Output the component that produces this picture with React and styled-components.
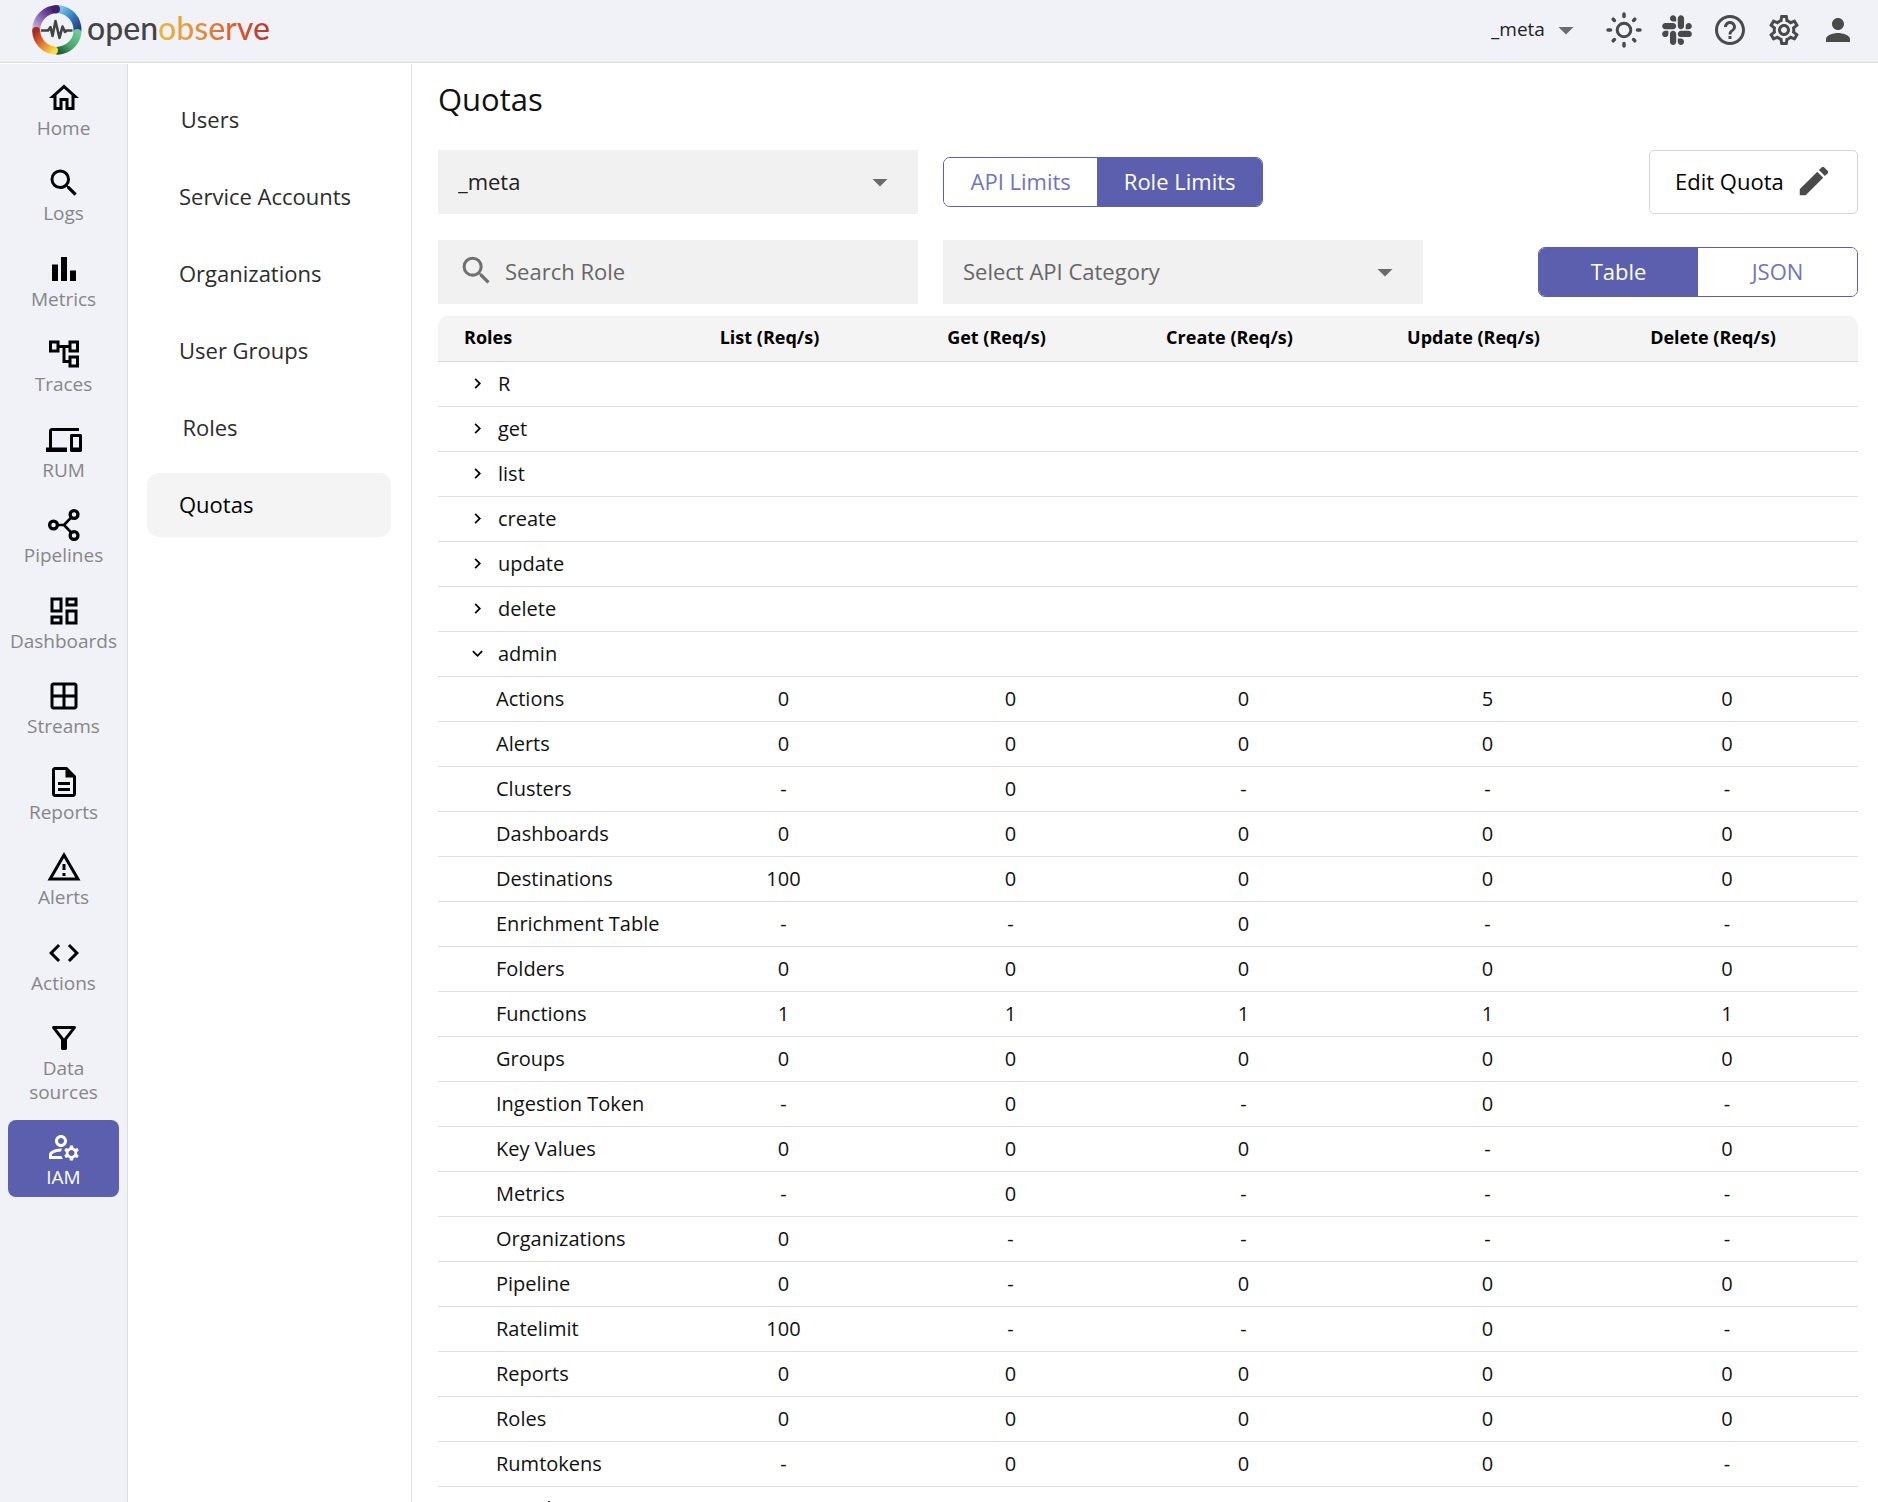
import React from "react";
import styled, { createGlobalStyle } from "styled-components";
import {
  MdOutlineHome, MdSearch, MdBarChart, MdOutlineAccountTree, MdOutlineDevices, MdOutlineDashboard,
  MdOutlineWindow, MdOutlineDescription, MdOutlineReportProblem, MdCode, MdOutlineFilterAlt,
  MdOutlineManageAccounts, MdHelpOutline, MdOutlineSettings, MdPerson, MdEdit, MdChevronRight, MdExpandMore,
  MdArrowDropDown,
} from "react-icons/md";
import { FaSlack } from "react-icons/fa";

const accent = "#5b5fad";
const line = "#dedede";

const GlobalStyle = createGlobalStyle`
  * { box-sizing: border-box; }
  body { margin: 0; background: #fff; color: #111; font-family: "Open Sans", "Noto Sans", sans-serif; font-size: 20px; }
  button, input, select { font: inherit; color: inherit; }
  a { color: inherit; text-decoration: none; }
`;

const Page = styled.div`
  display: flex;
  flex-direction: column;
  height: 100vh;
  overflow: hidden;
`;

const Header = styled.header`
  display: flex;
  align-items: center;
  justify-content: space-between;
  flex: none;
  height: 63px;
  padding: 0 22px 2px 32px;
  background: #f1f2f8;
  border-bottom: 1px solid ${line};
`;

const Brand = styled.a`
  display: flex;
  align-items: center;
  gap: 5px;
`;

const Wordmark = styled.span`
  padding-bottom: 5px;
  font-family: Lato, sans-serif;
  font-size: 32px;
  font-weight: 500;
  line-height: 40px;
  color: #444;
`;

const WordmarkAccent = styled.span`
  background: linear-gradient(90deg, #ebb840, #e08a38 40%, #dc5a34 70%, #b2362c);
  background-clip: text;
  color: transparent;
`;

const HeaderTools = styled.div`
  display: flex;
  align-items: center;
  gap: 18px;
`;

const IconButton = styled.button`
  display: flex;
  padding: 0;
  border: 0;
  background: none;
  color: #4a4a4a;
  font-size: ${(p) => p.$size || 36}px;
`;

const SelectBox = styled.label`
  display: flex;
  align-items: center;
  position: relative;
  width: ${(p) => p.$width || 480}px;
  height: ${(p) => (p.$bare ? 40 : 64)}px;
  margin-right: ${(p) => (p.$bare ? 4 : 0)}px;
  background: ${(p) => (p.$bare ? "none" : "#f1f1f1")};
  color: ${(p) => (p.$muted ? "#666" : "#222")};
  font-size: ${(p) => (p.$bare ? 19 : 22)}px;
  svg {
    position: absolute;
    right: ${(p) => (p.$bare ? 0 : 20)}px;
    font-size: 36px;
    color: #6b6b6b;
    pointer-events: none;
  }
`;

const Select = styled.select`
  appearance: none;
  width: 100%;
  height: 100%;
  padding: 0 ${(p) => (p.$bare ? 0 : 20)}px 2px;
  border: 0;
  background: none;
`;

const Body = styled.div`
  display: flex;
  flex: 1;
  min-height: 0;
  margin-top: 1px;
`;

const Sidebar = styled.nav`
  flex: none;
  width: 128px;
  padding: 7px 8px;
  background: #f1f2f8;
  border-right: 1px solid ${line};
`;

const NavList = styled.div`
  display: flex;
  flex-direction: column;
  justify-content: space-between;
  min-height: 75vh;
`;

const NavItem = styled.a`
  display: flex;
  flex-direction: column;
  align-items: center;
  padding: 9px 1px 8px;
  border-radius: 8px;
  background: ${(p) => (p.$active ? accent : "transparent")};
  color: ${(p) => (p.$active ? "#fff" : "#000")};
  svg { width: 36px; height: 36px; }
`;

const NavLabel = styled.span`
  color: ${(p) => (p.$active ? "#fff" : "#868686")};
  font-size: 19px;
  font-weight: 500;
  line-height: 24px;
  text-align: center;
`;

const Menu = styled.nav`
  display: flex;
  flex-direction: column;
  flex: none;
  gap: 13px;
  width: 284px;
  padding: 24px 20px 24px 19px;
  border-right: 1px solid ${line};
`;

const MenuItem = styled.a`
  display: flex;
  align-items: center;
  height: 64px;
  padding: 0 32px 2px;
  border-radius: 12px;
  background: ${(p) => (p.$active ? "#f4f4f4" : "transparent")};
  color: ${(p) => (p.$active ? "#000" : "#2c2c2c")};
  font-size: 22px;
`;

const MenuLabel = styled.span`
  min-width: 62px;
  text-align: center;
  white-space: nowrap;
`;

const Main = styled.main`
  display: flex;
  flex-direction: column;
  flex: 1;
  min-width: 0;
  padding: 15px 20px 0 26px;
`;

const Title = styled.h1`
  margin: 0 0 31px;
  font-size: 31px;
  font-weight: 400;
  line-height: 40px;
`;

const Toolbar = styled.div`
  display: flex;
  align-items: center;
  gap: 25px;
  height: 64px;
  margin-bottom: ${(p) => p.$bottom}px;
`;

const Spacer = styled.div`
  flex: 1;
`;

const Toggle = styled.div`
  display: flex;
  width: 320px;
  height: 50px;
  border: 1px solid ${accent};
  border-radius: 7px;
  overflow: hidden;
`;

const ToggleButton = styled.button`
  flex: 1 1 ${(p) => (p.$fit ? "auto" : "0")};
  padding: 0 2px 3px;
  border: 0;
  background: ${(p) => (p.$active ? accent : "#fff")};
  color: ${(p) => (p.$active ? "#fff" : "#6f74c0")};
  font-size: 22px;
`;

const EditButton = styled.button`
  display: flex;
  align-items: center;
  justify-content: space-between;
  width: 209px;
  height: 64px;
  padding: 0 24px 2px 25px;
  border: 1px solid #d5d5d5;
  border-radius: 5px;
  background: #fff;
  color: #000;
  font-size: 22px;
  svg { width: 38px; height: 38px; color: #4a4a4a; }
`;

const SearchBox = styled.label`
  display: flex;
  align-items: center;
  gap: 10px;
  width: 480px;
  height: 64px;
  padding: 0 20px 3px;
  background: #f1f1f1;
  svg { flex: none; width: 37px; height: 37px; color: #707070; }
`;

const SearchInput = styled.input`
  flex: 1;
  min-width: 0;
  padding: 0;
  border: 0;
  background: none;
  font-size: 22px;
  &::placeholder { color: #666; opacity: 1; }
`;

const TableArea = styled.div`
  flex: 1;
  min-height: 0;
  overflow: hidden;
`;

const Table = styled.table`
  width: 100%;
  table-layout: fixed;
  border-collapse: separate;
  border-spacing: 0;
`;

const Col = styled.col`
  width: ${(p) => p.$width}px;
`;

const HeadCell = styled.th`
  height: 46px;
  padding: 0 ${(p) => (p.$last ? 44 : 28)}px 3px 0;
  border-bottom: 1px solid #d6d6d6;
  background: #f4f4f4;
  color: #000;
  font-size: 18px;
  font-weight: 700;
  white-space: nowrap;
  &:first-child { padding-left: 26px; text-align: left; border-top-left-radius: 10px; }
  &:last-child { border-top-right-radius: 10px; }
`;

const Cell = styled.td`
  height: 45px;
  padding: 0 ${(p) => (p.$last ? 16 : 0)}px 2px 0;
  border-bottom: 1px solid ${line};
  font-size: 20px;
  text-align: center;
`;

const NameCell = styled(Cell)`
  padding-left: 58px;
  text-align: left;
  white-space: nowrap;
`;

const GroupCell = styled(Cell)`
  padding-left: 29px;
`;

const GroupButton = styled.button`
  display: flex;
  align-items: center;
  gap: 10px;
  padding: 0;
  border: 0;
  background: none;
  svg { width: 21px; height: 21px; color: #000; }
`;

const LogoMark = () => (
  <svg width="50" height="52" viewBox="32 4 50 52" fill="none" aria-hidden="true">
    <defs>
      <linearGradient id="purple" x1="0" y1="1" x2="1" y2="0"><stop offset="0" stopColor="#c3b3d8" /><stop offset=".65" stopColor="#68409a" /><stop offset="1" stopColor="#3a1a66" /></linearGradient>
      <linearGradient id="blue" x1="0" y1="0" x2="1" y2="1"><stop offset="0" stopColor="#74c3e8" /><stop offset=".6" stopColor="#2b72b8" /><stop offset="1" stopColor="#2a3f83" /></linearGradient>
      <linearGradient id="green" x1="1" y1="0" x2="0" y2="1"><stop offset="0" stopColor="#6cc795" /><stop offset=".55" stopColor="#4ea76d" /><stop offset="1" stopColor="#1e5c33" /></linearGradient>
      <linearGradient id="fire" x1="1" y1="1" x2="0" y2="0"><stop offset="0" stopColor="#f7dc45" /><stop offset=".5" stopColor="#e8762f" /><stop offset="1" stopColor="#a82a26" /></linearGradient>
    </defs>
    <g strokeWidth="8" strokeLinecap="round">
      <path d="M36.200 30A20.700 20.700 0 0 1 57 9.300" stroke="url(#purple)" />
      <path d="M60.500 9.500A20.700 20.700 0 0 1 77.500 30" stroke="url(#blue)" />
      <path d="M77.400 33A20.700 20.700 0 0 1 58 50.700" stroke="url(#green)" />
      <path d="M54 50.500A20.700 20.700 0 0 1 36.200 31" stroke="url(#fire)" />
      <path d="M55.500 9.300H56" stroke="#41206e" />
    </g>
    <path d="M41 30.500h7l2.500-3.500 2 9 3-15 4 17 3-11.500 2.500 5.500 1.500-1.500h6" stroke="#444" strokeWidth="2.600" strokeLinejoin="round" />
  </svg>
);

const SunIcon = () => (
  <svg width="36" height="36" viewBox="0 0 36 36" fill="none" stroke="currentColor" strokeWidth="3" strokeLinecap="round" aria-hidden="true">
    <circle cx="18" cy="18" r="6.800" />
    <path strokeWidth="3.500" d="M18 2v2.500M18 31.500v2.500M2 18h2.500M31.500 18h2.500M7.200 7.200l1.200 1.200M27.600 27.600l1.200 1.200M7.200 28.800l1.200-1.200M27.600 8.400l1.200-1.200" />
  </svg>
);

const PipelineIcon = () => (
  <svg viewBox="0 0 24 24" fill="none" stroke="currentColor" strokeWidth="2.200" aria-hidden="true">
    <circle cx="5" cy="12" r="2.600" />
    <circle cx="18.700" cy="5" r="2.600" />
    <circle cx="18.700" cy="19" r="2.600" />
    <path strokeWidth="1.800" d="M7.600 12H12l4.900-5.100M12 12l4.900 5.100" />
  </svg>
);

const navItems = [
  ["Home", MdOutlineHome], ["Logs", MdSearch], ["Metrics", MdBarChart], ["Traces", MdOutlineAccountTree],
  ["RUM", MdOutlineDevices], ["Pipelines", PipelineIcon], ["Dashboards", MdOutlineDashboard],
  ["Streams", MdOutlineWindow], ["Reports", MdOutlineDescription], ["Alerts", MdOutlineReportProblem],
  ["Actions", MdCode], ["Data sources", MdOutlineFilterAlt], ["IAM", MdOutlineManageAccounts],
];

const menuItems = ["Users", "Service Accounts", "Organizations", "User Groups", "Roles", "Quotas"];

const columns = [
  ["Roles", 232], ["List (Req/s)", 227], ["Get (Req/s)", 227], ["Create (Req/s)", 239],
  ["Update (Req/s)", 249], ["Delete (Req/s)", 246],
];

const groups = ["R", "get", "list", "create", "update", "delete", "admin"];

const limits = [
  ["Actions", "0", "0", "0", "5", "0"],
  ["Alerts", "0", "0", "0", "0", "0"],
  ["Clusters", "-", "0", "-", "-", "-"],
  ["Dashboards", "0", "0", "0", "0", "0"],
  ["Destinations", "100", "0", "0", "0", "0"],
  ["Enrichment Table", "-", "-", "0", "-", "-"],
  ["Folders", "0", "0", "0", "0", "0"],
  ["Functions", "1", "1", "1", "1", "1"],
  ["Groups", "0", "0", "0", "0", "0"],
  ["Ingestion Token", "-", "0", "-", "0", "-"],
  ["Key Values", "0", "0", "0", "-", "0"],
  ["Metrics", "-", "0", "-", "-", "-"],
  ["Organizations", "0", "-", "-", "-", "-"],
  ["Pipeline", "0", "-", "0", "0", "0"],
  ["Ratelimit", "100", "-", "-", "0", "-"],
  ["Reports", "0", "0", "0", "0", "0"],
  ["Roles", "0", "0", "0", "0", "0"],
  ["Rumtokens", "-", "0", "0", "0", "-"],
  ["Saved Views", "0", "0", "0", "0", "0"],
];

export default function App() {
  return (
    <Page>
      <GlobalStyle />
      <Header>
        <Brand href="#" aria-label="openobserve">
          <LogoMark />
          <Wordmark>open<WordmarkAccent>observe</WordmarkAccent></Wordmark>
        </Brand>
        <HeaderTools>
          <SelectBox $bare $width={93}>
            <Select $bare aria-label="Organization"><option>_meta</option></Select>
            <MdArrowDropDown />
          </SelectBox>
          <IconButton aria-label="Theme"><SunIcon /></IconButton>
          <IconButton $size={34} aria-label="Slack"><FaSlack /></IconButton>
          <IconButton aria-label="Help"><MdHelpOutline /></IconButton>
          <IconButton aria-label="Settings"><MdOutlineSettings /></IconButton>
          <IconButton aria-label="Profile"><MdPerson /></IconButton>
        </HeaderTools>
      </Header>
      <Body>
        <Sidebar>
          <NavList>
            {navItems.map(([label, Icon]) => (
              <NavItem key={label} href="#" $active={label === "IAM"}>
                <Icon />
                <NavLabel $active={label === "IAM"}>{label}</NavLabel>
              </NavItem>
            ))}
          </NavList>
        </Sidebar>
        <Menu>
          {menuItems.map((label) => (
            <MenuItem key={label} href="#" $active={label === "Quotas"}>
              <MenuLabel>{label}</MenuLabel>
            </MenuItem>
          ))}
        </Menu>
        <Main>
          <Title>Quotas</Title>
          <Toolbar $bottom={26}>
            <SelectBox>
              <Select aria-label="Organization quota"><option>_meta</option></Select>
              <MdArrowDropDown />
            </SelectBox>
            <Toggle>
              <ToggleButton $fit>API Limits</ToggleButton>
              <ToggleButton $fit $active>Role Limits</ToggleButton>
            </Toggle>
            <Spacer />
            <EditButton>Edit Quota<MdEdit /></EditButton>
          </Toolbar>
          <Toolbar $bottom={12}>
            <SearchBox>
              <MdSearch />
              <SearchInput placeholder="Search Role" aria-label="Search Role" />
            </SearchBox>
            <SelectBox $muted>
              <Select aria-label="API category"><option>Select API Category</option></Select>
              <MdArrowDropDown />
            </SelectBox>
            <Spacer />
            <Toggle>
              <ToggleButton $active>Table</ToggleButton>
              <ToggleButton>JSON</ToggleButton>
            </Toggle>
          </Toolbar>
          <TableArea>
            <Table>
              <colgroup>{columns.map(([name, width]) => <Col key={name} $width={width} />)}</colgroup>
              <thead>
                <tr>{columns.map(([name], i) => <HeadCell key={name} $last={i === 5}>{name}</HeadCell>)}</tr>
              </thead>
              <tbody>
                {groups.map((name) => (
                  <tr key={name}>
                    <GroupCell colSpan={6}>
                      <GroupButton aria-expanded={name === "admin"}>
                        {name === "admin" ? <MdExpandMore /> : <MdChevronRight />}
                        {name}
                      </GroupButton>
                    </GroupCell>
                  </tr>
                ))}
                {limits.map(([name, ...values]) => (
                  <tr key={name}>
                    <NameCell>{name}</NameCell>
                    {values.map((value, i) => <Cell key={i} $last={i === 4}>{value}</Cell>)}
                  </tr>
                ))}
              </tbody>
            </Table>
          </TableArea>
        </Main>
      </Body>
    </Page>
  );
}
